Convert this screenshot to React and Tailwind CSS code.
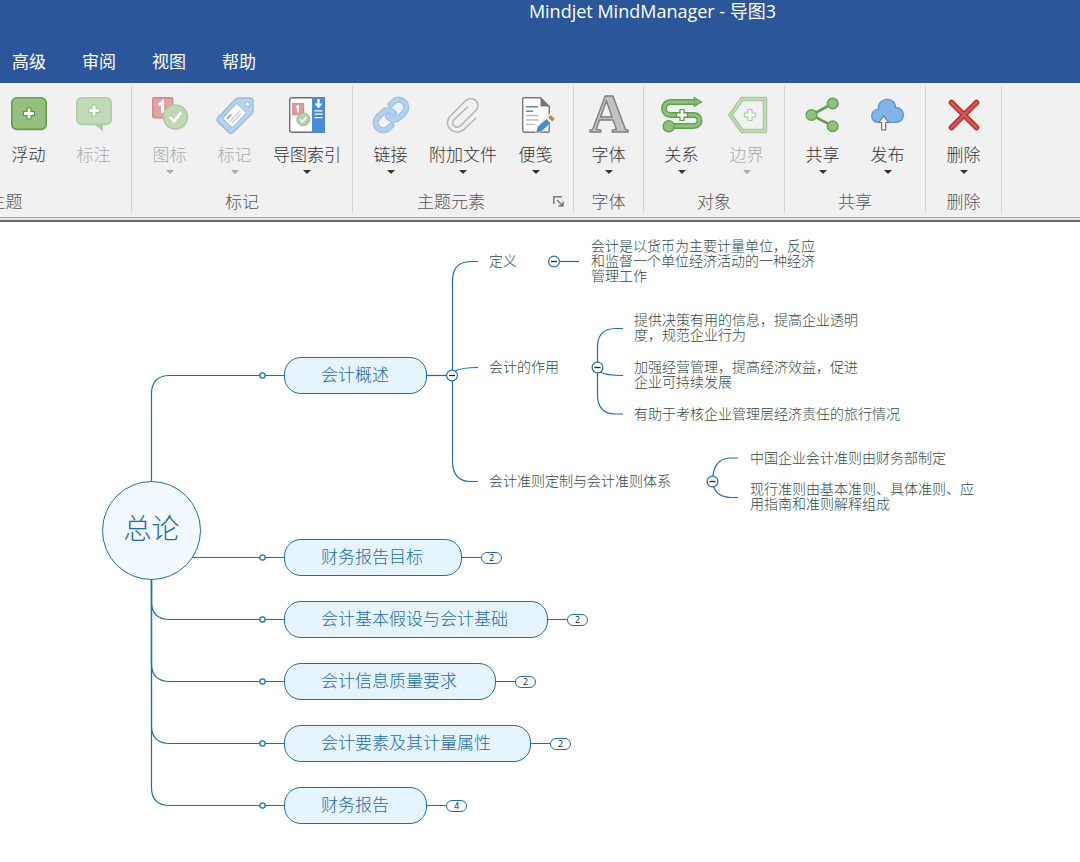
import React from 'react';

const LINE = '#1a6fad';

// white plus sign with a green outline, used by several icons
const Plus = ({ x, y, stroke = '#4f9a45' }) => (
  <path
    transform={`translate(${x} ${y})`}
    d="M-2-5.5h4v3.5h3.5v4h-3.5v3.5h-4v-3.5h-3.5v-4h3.5z"
    fill="#fff"
    stroke={stroke}
    strokeWidth="1.2"
  />
);

const Icon = ({ children }) => (
  <svg width="36" height="36" viewBox="0 0 36 36" fill="none" className="overflow-visible" aria-hidden="true">
    {children}
  </svg>
);

const FloatingIcon = () => (
  <Icon>
    <rect x="0.8" y="0.8" width="34.4" height="31.6" rx="5" fill="#94bf7c" stroke="#5aa24e" strokeWidth="1.6" />
    <Plus x={18} y={16.5} />
  </Icon>
);

const CalloutIcon = () => (
  <Icon>
    <path d="M18 27l9 7.5V27z" fill="#a9cfa0" />
    <rect x="0.8" y="0.8" width="34.4" height="26.6" rx="5" fill="#c3dab7" stroke="#a9cfa0" strokeWidth="1.6" />
    <Plus x={18} y={13.5} stroke="#a3cb9a" />
  </Icon>
);

const MarkersIcon = () => (
  <Icon>
    <rect x="0.7" y="0.7" width="20" height="20" rx="1.5" fill="#e2a3a1" stroke="#d98886" strokeWidth="1.4" />
    <path d="M6.5 8.2l4-3.2v11" stroke="#fff" strokeWidth="3" />
    <circle cx="23.5" cy="20" r="12" fill="#c1d8b5" stroke="#a6cd9d" strokeWidth="1.5" />
    <path d="M18 20l4 4.5 7-9" stroke="#fff" strokeWidth="2.6" />
  </Icon>
);

const TagIcon = () => (
  <Icon>
    <path
      d="M0.5 21L19 1.8Q20 1 21.5 1H33Q36 1 36 4V14Q36 15.5 35 16.5L16 35.5Q14 37.2 12 35.5L0.5 24.5Q-0.8 23 0.5 21Z"
      fill="#b5d2ef"
      stroke="#93bae3"
      strokeWidth="1.4"
    />
    <g transform="translate(17.5 18.5) rotate(-47)">
      <rect x="-10.5" y="-7" width="21" height="14" rx="1.5" fill="#fbfcfd" stroke="#93bae3" strokeWidth="1" />
      <path d="M-7.5-3h6" stroke="#8a8f94" strokeWidth="1.4" />
      <path d="M-7.5 0.8h14.5M-7.5 3.5h13" stroke="#c7cacd" strokeWidth="1.2" />
    </g>
    <circle cx="30.3" cy="7.3" r="2.3" fill="#fff" stroke="#93bae3" />
  </Icon>
);

const MapIndexIcon = () => (
  <Icon>
    <rect x="0.7" y="0.7" width="34" height="34.6" rx="2" fill="#fff" stroke="#6e6e6e" strokeWidth="1.4" />
    <path d="M23 0h13v36H23z" fill="#4b8bd4" />
    <path d="M29.5 2v5" stroke="#fff" strokeWidth="2.2" />
    <path d="M25.5 6.5h8l-4 5z" fill="#fff" />
    <path d="M25.5 13.8h8M25.5 17.2h8M25.5 20.6h8" stroke="#fff" strokeWidth="1.3" />
    <rect x="3.7" y="6.7" width="11" height="11" fill="#e39a98" stroke="#d6827f" />
    <path d="M7 10.4l2-1.4v6.5" stroke="#fff" strokeWidth="1.8" />
    <circle cx="14.3" cy="22.3" r="6.4" fill="#b5d3a8" stroke="#8dc083" />
    <path d="M11 22.2l2.4 2.7 4-5" stroke="#fff" strokeWidth="1.7" />
  </Icon>
);

const chain = [
  'M10 13a5 5 0 0 0 7.54.54l3-3a5 5 0 0 0-7.07-7.07l-1.72 1.71',
  'M14 11a5 5 0 0 0-7.54-.54l-3 3a5 5 0 0 0 7.07 7.07l1.71-1.71',
];

const LinkIcon = () => (
  <Icon>
    <g transform="translate(-0.5 -0.5) scale(1.54)" strokeLinecap="round">
      {chain.map((d) => (
        <g key={d}>
          <path d={d} stroke="#98c0e8" strokeWidth="4" />
          <path d={d} stroke="#b3d0ed" strokeWidth="2.6" />
        </g>
      ))}
    </g>
  </Icon>
);

const AttachIcon = () => (
  <Icon>
    <path
      d="M30.5 21.5L19 32.3C9.5 40.5-3 28.5 5 19.5L20.3 4C27.5-2.5 37 6 30.8 13.5L15.5 28.8C11 32.5 5 27.5 9 22.7L22.5 10"
      stroke="#b8b8b8"
      strokeWidth="1.7"
      strokeLinecap="round"
    />
  </Icon>
);

const NotesIcon = () => (
  <Icon>
    <path
      d="M6 0.7H22.5L31.3 9.5V33.3Q31.3 35.3 29.3 35.3H6Q4.7 35.3 4.7 33.3V2.7Q4.7 0.7 6 0.7Z"
      fill="#fff"
      stroke="#777"
      strokeWidth="1.4"
    />
    <path d="M22.5 0.5V9.5H31.5z" fill="#777" />
    <path d="M8 9.8h12M8 14.3h7" stroke="#4b8bd4" strokeWidth="1.4" />
    <path d="M8 18.5h12.5M8 23h12.5M8 27.4h9.5" stroke="#bdbdbd" strokeWidth="1.3" />
    <path d="M17 37L19 28.5 33 15.5 38 20.5 24 35z" fill="#f1f1f1" />
    <path d="M18 36l2-6.5 8.5-7.5 4 4-9 8.5z" fill="#4b8bd4" />
    <path d="M30.2 20.4l2.5-2.4 4 3.8-2.5 2.6z" fill="#bf8a3c" />
  </Icon>
);

const FontIcon = () => (
  <Icon>
    <text
      x="18"
      y="35"
      textAnchor="middle"
      fontSize="54"
      fontWeight="bold"
      fontFamily="Liberation Serif, serif"
      fill="#c3c3c3"
      stroke="#808080"
      strokeWidth="1.4"
    >
      A
    </text>
  </Icon>
);

const RelationshipIcon = () => (
  <Icon>
    <path d="M30 0.3L38 5 30 9.7z" fill="#84b86f" stroke="#5aa24e" />
    <path d="M30 5H6.5a6.5 6.5 0 0 0 0 13H30a5.5 5.5 0 0 1 0 11H5" stroke="#5aa24e" strokeWidth="6" />
    <path d="M30 5H6.5a6.5 6.5 0 0 0 0 13H30a5.5 5.5 0 0 1 0 11H5" stroke="#93bf7d" strokeWidth="3.2" />
    <circle cx="4.7" cy="29.3" r="5.6" fill="#93bf7d" stroke="#5aa24e" strokeWidth="1.3" />
    <Plus x={18} y={18} />
  </Icon>
);

const BoundaryIcon = () => (
  <Icon>
    <path d="M1.5 18L13 2h23v32H13z" stroke="#a4cd9b" strokeWidth="4.6" strokeLinejoin="round" />
    <path d="M1.5 18L13 2h23v32H13z" stroke="#bfd9b5" strokeWidth="2" strokeLinejoin="round" />
    <Plus x={21} y={18} stroke="#a4cd9b" />
  </Icon>
);

const ShareIcon = () => (
  <Icon>
    <path d="M27.7 6.5L6.5 18l21.2 11.2" stroke="#5aa24e" strokeWidth="2.6" />
    {[[27.7, 6.5], [6.5, 18], [27.7, 29.2]].map(([x, y]) => (
      <circle key={y} cx={x} cy={y} r="5.4" fill="#93bf7d" stroke="#5aa24e" strokeWidth="1.3" />
    ))}
  </Icon>
);

const PublishIcon = () => (
  <Icon>
    <path
      d="M8 25.3C-0.5 25.3-0.5 12.5 8.5 12.2C7 0 25.5-1 25.5 10.5C35.5 10 36 25.3 26.5 25.3Z"
      fill="#7fb5e8"
      stroke="#5596db"
      strokeWidth="1.3"
    />
    <path d="M13.7 19L18.5 25.5H15.7V32.8H11.7V25.5H9z" fill="#fff" stroke="#777" strokeWidth="1.2" />
  </Icon>
);

const DeleteIcon = () => (
  <Icon>
    <g strokeLinecap="round">
      <path d="M5.5 5.5l25 25M30.5 5.5l-25 25" stroke="#b62a28" strokeWidth="5.6" />
      <path d="M5.5 5.5l25 25M30.5 5.5l-25 25" stroke="#d65552" strokeWidth="3" />
    </g>
  </Icon>
);

const menus = ['高级', '审阅', '视图', '帮助'];

const groups = [
  {
    title: '主题',
    first: true,
    items: [
      { label: '浮动', icon: FloatingIcon },
      { label: '标注', icon: CalloutIcon, disabled: true },
    ],
  },
  {
    title: '标记',
    items: [
      { label: '图标', icon: MarkersIcon, disabled: true, arrow: true },
      { label: '标记', icon: TagIcon, disabled: true, arrow: true },
      { label: '导图索引', icon: MapIndexIcon, arrow: true, width: 'w-20' },
    ],
  },
  {
    title: '主题元素',
    launcher: true,
    items: [
      { label: '链接', icon: LinkIcon, arrow: true },
      { label: '附加文件', icon: AttachIcon, arrow: true, width: 'w-20' },
      { label: '便笺', icon: NotesIcon, arrow: true },
    ],
  },
  { title: '字体', items: [{ label: '字体', icon: FontIcon, arrow: true, width: 'w-[59px]' }] },
  {
    title: '对象',
    items: [
      { label: '关系', icon: RelationshipIcon, arrow: true },
      { label: '边界', icon: BoundaryIcon, disabled: true, arrow: true },
    ],
  },
  {
    title: '共享',
    items: [
      { label: '共享', icon: ShareIcon, arrow: true },
      { label: '发布', icon: PublishIcon, arrow: true },
    ],
  },
  { title: '删除', items: [{ label: '删除', icon: DeleteIcon, arrow: true }] },
];

const RibbonButton = ({ item }) => {
  const ButtonIcon = item.icon;
  return (
    <button
      type="button"
      disabled={item.disabled}
      className={`flex shrink-0 flex-col items-center text-[#333] disabled:text-[#aaa] ${item.width || 'w-[65px]'}`}
    >
      <ButtonIcon />
      <span className="mt-[9px] whitespace-nowrap leading-6">{item.label}</span>
      {item.arrow && (
        <svg width="8" height="4" viewBox="0 0 8 4" className="mt-1" fill="currentColor" aria-hidden="true">
          <path d="M0 0h8L4 4z" />
        </svg>
      )}
    </button>
  );
};

// the first group is scrolled partly out of view on the left
const RibbonGroup = ({ group }) => (
  <section className={`flex shrink-0 flex-col border-r border-[#d4d4d4] ${group.first ? '-ml-[120px] w-[252px]' : ''}`}>
    <div className={`flex h-[103px] items-start px-[5px] pt-[11px] ${group.first ? 'justify-end' : ''}`}>
      {group.items.map((item) => (
        <RibbonButton key={item.label} item={item} />
      ))}
    </div>
    <div className="flex items-center text-[#555]">
      <h2 className="flex-1 text-center leading-6">{group.title}</h2>
      {group.launcher && (
        <button type="button" aria-label={group.title} className="flex w-6 justify-start pl-1">
          <svg width="11" height="11" viewBox="0 0 11 11" fill="none" stroke="#777" strokeWidth="1.5" aria-hidden="true">
            <path d="M0.8 8V0.8H9M4 4l5.5 5.5M10 5.5V10H5.5" />
          </svg>
        </button>
      )}
    </div>
  </section>
);

// main branches: position of the pill on the canvas
const branches = [
  { text: '会计概述', y: 135, width: 143 },
  { text: '财务报告目标', y: 317, width: 178, count: 2 },
  { text: '会计基本假设与会计基础', y: 379, width: 264, count: 2 },
  { text: '会计信息质量要求', y: 441, width: 212, count: 2 },
  { text: '会计要素及其计量属性', y: 503, width: 247, count: 2 },
  { text: '财务报告', y: 565, width: 143, count: 4 },
];

const notes = [
  { text: '定义', x: 489, y: 31 },
  { text: '会计的作用', x: 489, y: 137 },
  { text: '会计准则定制与会计准则体系', x: 489, y: 251 },
  { text: '会计是以货币为主要计量单位，反应和监督一个单位经济活动的一种经济管理工作', x: 591, y: 16, wrap: true },
  { text: '提供决策有用的信息，提高企业透明度，规范企业行为', x: 634, y: 90, wrap: true },
  { text: '加强经营管理，提高经济效益，促进企业可持续发展', x: 634, y: 137, wrap: true },
  { text: '有助于考核企业管理层经济责任的旅行情况', x: 634, y: 184 },
  { text: '中国企业会计准则由财务部制定', x: 750, y: 228 },
  { text: '现行准则由基本准则、具体准则、应用指南和准则解释组成', x: 750, y: 259, wrap: true },
];

const toggles = [[452, 153.5], [554, 39.5], [597.5, 145.5], [712.5, 259.5]];

const Connectors = () => (
  <svg width="1000" height="640" viewBox="0 0 1000 640" fill="none" stroke={LINE} strokeWidth="1.2" aria-hidden="true">
    <path d="M151.5 260V172Q151.5 153.5 170 153.5H285" />
    <path d="M190 335.5H285" />
    {[397.5, 459.5, 521.5, 583.5].map((y) => (
      <path key={y} d={`M151.5 357V${y - 18}Q151.5 ${y} 170 ${y}H285`} />
    ))}
    {[153.5, 335.5, 397.5, 459.5, 521.5, 583.5].map((y) => (
      <circle key={y} cx="262.5" cy={y} r="2.6" fill="#fff" />
    ))}
    <path d="M427 153.5H447" />
    <path d="M452.5 153V58Q453 40 470 39.5H478M452.5 153V240Q453 259 470 259.5H478M455 149Q462 145.5 478 145.5" />
    <path d="M559 39.5H579" />
    <path d="M597.5 145V124Q598 107 615 106.5H623M597.5 145V174Q598 191.5 615 192H623M600 150Q606 153.5 623 153.5" />
    <path d="M712.5 259Q713 236.5 730 236H738M712.5 259Q714 275 731 275.5H738" />
    {toggles.map(([x, y]) => (
      <g key={x}>
        <circle cx={x} cy={y} r="5.4" fill="#fff" />
        <path d={`M${x - 3} ${y}h6`} stroke="#222" strokeWidth="1.3" />
      </g>
    ))}
  </svg>
);

const MindMap = () => (
  <main className="relative min-h-[640px] overflow-hidden bg-white">
    <Connectors />
    <div className="absolute left-[102px] top-[259px] flex h-[99px] w-[99px] items-center justify-center rounded-full border border-[#1a6fad] bg-[#f2f9ff] pb-2 text-[28px] font-light text-[#1a6cab]">
      总论
    </div>
    {branches.map((b) => (
      <div key={b.text} className="absolute left-[284px] flex items-center" style={{ top: b.y }}>
        <div
          className="flex h-[37px] items-center rounded-[17px] border border-[#1a6fad] bg-[#e6f4ff] pb-1 pl-9 text-[17px] font-light text-[#1a6cab]"
          style={{ width: b.width }}
        >
          {b.text}
        </div>
        {b.count && (
          <>
            <span className="h-px w-[19px] bg-[#1a6fad]"></span>
            <button
              type="button"
              className="flex h-3 w-[21px] items-center justify-center rounded-full border border-[#1a6fad] bg-white font-['Open_Sans',sans-serif] text-[9px] leading-none text-[#222]"
            >
              {b.count}
            </button>
          </>
        )}
      </div>
    ))}
    {notes.map((n) => (
      <p
        key={n.text}
        className={`absolute text-sm/[15px] font-light text-[#2f4a45] ${n.wrap ? 'w-[234px]' : 'whitespace-nowrap'}`}
        style={{ left: n.x, top: n.y }}
      >
        {n.text}
      </p>
    ))}
  </main>
);

const App = () => {
  return (
    <div lang="zh-CN" className="min-h-screen overflow-x-hidden bg-white font-['Noto_Sans_CJK_SC',sans-serif] text-[17px]">
      <header className="bg-[#2b579a] text-white">
        <h1 className="h-10 pl-[225px] text-center font-['Open_Sans','Noto_Sans_CJK_SC',sans-serif] text-lg/[22px]">
          Mindjet MindManager - 导图3
        </h1>
        <nav className="flex h-[43px] items-center gap-9 px-3 pb-[2px]">
          {menus.map((m) => (
            <a key={m} href="#" className="leading-6">
              {m}
            </a>
          ))}
        </nav>
      </header>
      <div className="border-b border-[#a6a6a6] bg-[#f1f1f1] pb-1 pt-[3px] font-light">
        <div className="flex">
          {groups.map((g) => (
            <RibbonGroup key={g.title} group={g} />
          ))}
        </div>
      </div>
      <div className="h-1 border-b-2 border-[#6b6b6b] bg-[#e3e3e3]"></div>
      <MindMap />
    </div>
  );
};

export default App;
